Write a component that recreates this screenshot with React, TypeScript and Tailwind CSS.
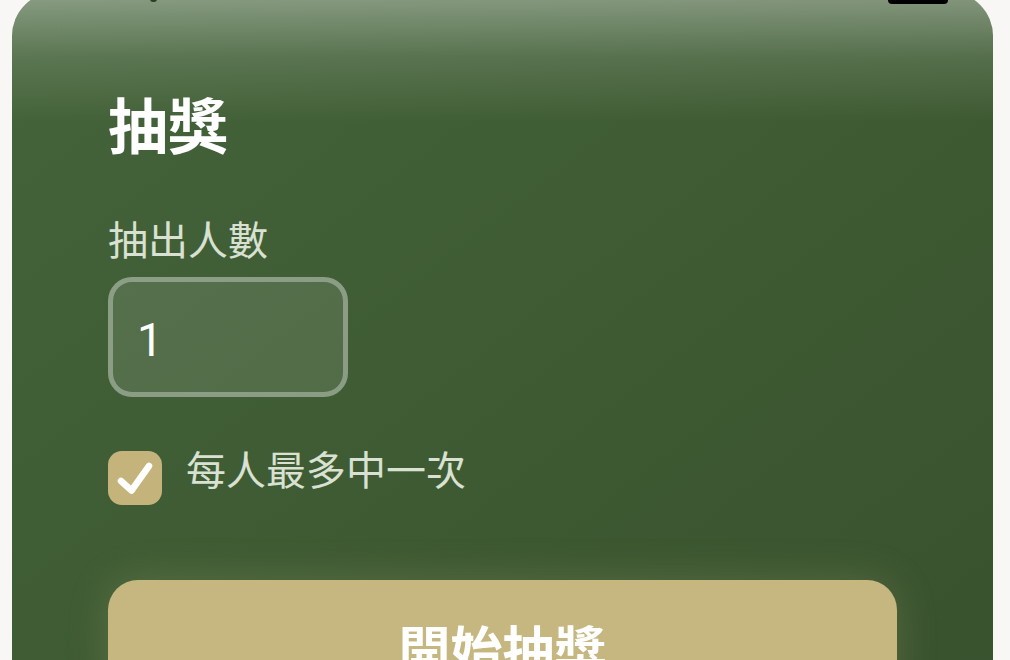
import React from "react";

export default function App() {
  return (
    <div
      className="relative w-full h-[660px] overflow-hidden bg-[#f8f7f5]"
      style={{ fontFamily: '"Noto Sans CJK TC", "Noto Sans", sans-serif' }}
    >
      <div className="relative ml-[12px] mr-[17px] -mt-[8px] h-[760px] rounded-[44px] overflow-hidden bg-gradient-to-br from-[#45643b] via-[#3e5b33] to-[#38512e]">
        <div className="absolute inset-x-0 top-0 h-[130px] bg-gradient-to-b from-[rgba(255,255,255,0.38)] via-[rgba(255,255,255,0.12)] to-transparent" />
        <div className="relative px-[96px] pt-[101px] flex flex-col">
          <h1 className="text-[60px] leading-none font-bold text-white">抽獎</h1>
          <div className="mt-[65px] text-[40px] leading-none text-[#d9e1d2]">抽出人數</div>
          <div className="mt-[19px] w-[240px] h-[120px] rounded-[24px] border-[5px] border-[rgba(255,255,255,0.33)] bg-[rgba(255,255,255,0.1)] flex items-center pl-[24px] pt-[5px]">
            <span
              className="text-[46px] leading-none text-white"
              style={{ fontFamily: 'Roboto, "Liberation Sans", sans-serif' }}
            >
              1
            </span>
          </div>
          <div className="mt-[54px] flex items-start gap-[24px]">
            <div className="w-[54px] h-[54px] rounded-[14px] bg-[#c4b47c] flex items-center justify-center shrink-0">
              <svg width="54" height="54" viewBox="0 0 54 54" fill="none">
                <path
                  d="M13 30 L23.5 39.5 L41 15"
                  stroke="white"
                  strokeWidth="6.5"
                  strokeLinecap="round"
                  strokeLinejoin="round"
                />
              </svg>
            </div>
            <span className="text-[40px] leading-none text-[#d9e1d2] -mt-[3px]">每人最多中一次</span>
          </div>
          <button className="mt-[75px] w-full h-[150px] rounded-[30px] bg-[#c5b77f] shadow-[0_0_40px_rgba(197,183,127,0.22)] flex justify-center pt-[42px]">
            <span className="text-[52px] leading-none font-bold text-white">開始抽獎</span>
          </button>
        </div>
      </div>
      <div className="absolute left-[150px] top-[-4px] w-[7px] h-[6px] rounded-full bg-[#2d3b28]" />
      <div className="absolute left-[888px] top-[-4px] w-[60px] h-[8px] rounded-[4px] bg-black" />
    </div>
  );
}
